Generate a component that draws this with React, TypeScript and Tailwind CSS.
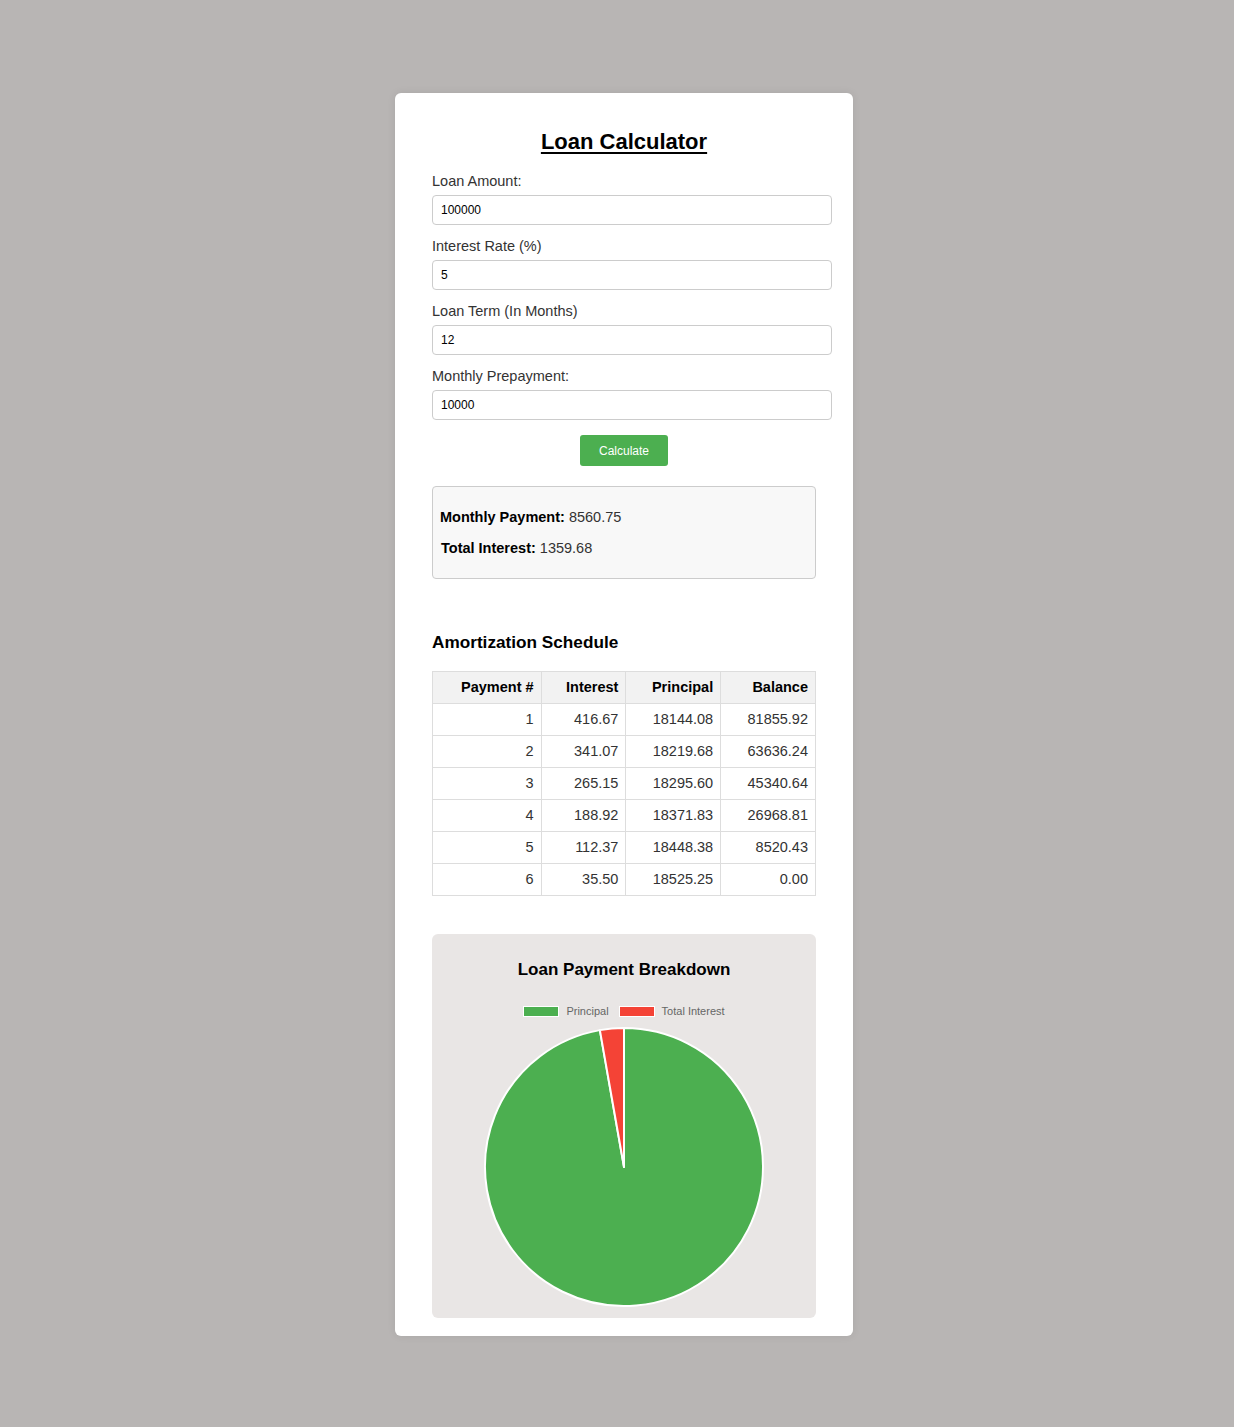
import React from 'react'

// ─── Data ─────────────────────────────────────────────────────────────────────

const fields = [
  { label: 'Loan Amount:', value: '100000' },
  { label: 'Interest Rate (%)', value: '5' },
  { label: 'Loan Term (In Months)', value: '12' },
  { label: 'Monthly Prepayment:', value: '10000' },
]

const schedule = [
  ['1', '416.67', '18144.08', '81855.92'],
  ['2', '341.07', '18219.68', '63636.24'],
  ['3', '265.15', '18295.60', '45340.64'],
  ['4', '188.92', '18371.83', '26968.81'],
  ['5', '112.37', '18448.38', '8520.43'],
  ['6', '35.50', '18525.25', '0.00'],
]

// ─── Sub-components ───────────────────────────────────────────────────────────

function Field({ label, value }: { label: string; value: string }) {
  return (
    <div className="flex flex-col">
      <label className="text-[14.5px] leading-[16px] text-[#333]">{label}</label>
      <input
        readOnly
        value={value}
        className="mt-[6px] h-[30px] w-[400px] rounded-[4px] border border-[#ccc] bg-white px-[8px] text-[12px] text-black outline-none"
      />
    </div>
  )
}

function Pie() {
  // red slice = last ~10° before 12 o'clock, green fills the rest
  const c = 141
  const r = 139
  const a = (10 * Math.PI) / 180
  const x = c - r * Math.sin(a)
  const y = c - r * Math.cos(a)
  return (
    <svg width="282" height="282" viewBox="0 0 282 282">
      <path d={`M${c} ${c} L${c} ${c - r} A${r} ${r} 0 1 1 ${x} ${y} Z`} fill="#4caf50" stroke="#fff" strokeWidth="2" strokeLinejoin="round" />
      <path d={`M${c} ${c} L${x} ${y} A${r} ${r} 0 0 1 ${c} ${c - r} Z`} fill="#f44336" stroke="#fff" strokeWidth="2" strokeLinejoin="round" />
    </svg>
  )
}

// ─── Main component ───────────────────────────────────────────────────────────

export default function App() {
  return (
    <div className="min-h-screen bg-[#b8b5b4] pl-[14px] pt-[93px] pb-[91px] font-['Liberation_Sans',Arial,sans-serif]">
      <div className="mx-auto w-[458px] rounded-[6px] bg-white px-[37px] pt-[36px] pb-[18px] shadow-[0_0_8px_rgba(0,0,0,0.08)]">
        <h2 className="text-center text-[22px] leading-[26px] font-bold text-black underline underline-offset-[3px]">
          Loan Calculator
        </h2>

        {/* Inputs */}
        <div className="mt-[18px] flex flex-col gap-[13px]">
          {fields.map(f => (
            <Field key={f.label} label={f.label} value={f.value} />
          ))}
        </div>

        <div className="mt-[15px] flex justify-center">
          <button className="h-[31px] w-[88px] rounded-[3px] bg-[#4caf50] text-[12px] text-white">
            Calculate
          </button>
        </div>

        {/* Results */}
        <div className="mt-[20px] rounded-[4px] border border-[#ccc] bg-[#f8f8f8] px-[7px] pt-[22px] pb-[21px] text-[14.5px] leading-[17px] text-[#333]">
          <p>
            <strong className="text-black">Monthly Payment:</strong> 8560.75
          </p>
          <p className="mt-[14px] pl-[1px]">
            <strong className="text-black">Total Interest:</strong> 1359.68
          </p>
        </div>

        {/* Schedule */}
        <h3 className="mt-[53px] text-[17.2px] leading-[20px] font-bold text-black">Amortization Schedule</h3>
        <table className="mt-[19px] w-[384px] border-collapse text-[14.5px] text-[#333]">
          <thead>
            <tr className="h-[32px] bg-[#f2f2f2]">
              {['Payment #', 'Interest', 'Principal', 'Balance'].map((h, i) => (
                <th
                  key={h}
                  className={`border border-[#ddd] px-[7px] text-right font-bold text-black ${
                    i === 0 ? 'w-[109px]' : i === 1 ? 'w-[85px]' : 'w-[95px]'
                  }`}
                >
                  {h}
                </th>
              ))}
            </tr>
          </thead>
          <tbody>
            {schedule.map(row => (
              <tr key={row[0]} className="h-[32px]">
                {row.map((cell, i) => (
                  <td key={i} className="border border-[#ddd] px-[7px] text-right">
                    {cell}
                  </td>
                ))}
              </tr>
            ))}
          </tbody>
        </table>

        {/* Chart */}
        <div className="mt-[38px] flex flex-col items-center rounded-[6px] bg-[#e9e6e5] pt-[26px] pb-[10px]">
          <h3 className="text-[17px] leading-[20px] font-bold text-black">Loan Payment Breakdown</h3>
          <div className="mt-[25px] flex items-center text-[11px] leading-[12px] text-[#666]">
            <span className="h-[11px] w-[36px] border border-white bg-[#4caf50]" />
            <span className="ml-[7px]">Principal</span>
            <span className="ml-[10px] h-[11px] w-[36px] border border-white bg-[#f44336]" />
            <span className="ml-[7px]">Total Interest</span>
          </div>
          <div className="mt-[9px]">
            <Pie />
          </div>
        </div>
      </div>
    </div>
  )
}
